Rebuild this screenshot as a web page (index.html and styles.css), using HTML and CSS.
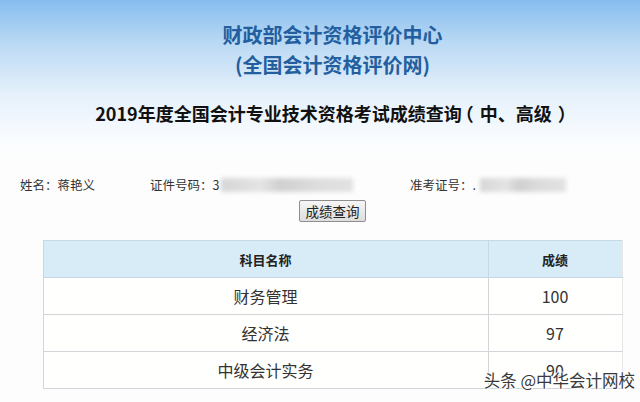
FILE: index.html
```html
<!DOCTYPE html>
<html lang="zh-CN">
<head>
    <meta charset="UTF-8">
    <title>成绩查询</title>
    <link rel="stylesheet" href="styles.css">
</head>
<body>
    <div class="page">
        <!-- 顶部标题 -->
        <div class="banner">
            <h1 class="org">财政部会计资格评价中心</h1>
            <h1 class="org">(全国会计资格评价网)</h1>
            <h2 class="exam-title">2019年度全国会计专业技术资格考试成绩查询<span class="paren-open">（</span>中、高级<span class="paren-close">）</span></h2>
        </div>

        <!-- 考生信息 -->
        <div class="info">
            <div class="info-item name">姓名：蒋艳义</div>
            <div class="info-item idcard">证件号码：3<span class="masked masked-id"></span></div>
            <div class="info-item ticket">准考证号：.<span class="masked masked-ticket"></span></div>
        </div>
        <div class="actions">
            <button type="button" class="query-btn">成绩查询</button>
        </div>

        <!-- 成绩表 -->
        <div class="result">
            <table class="score-table">
                <thead>
                    <tr>
                        <th class="col-subject">科目名称</th>
                        <th class="col-score">成绩</th>
                    </tr>
                </thead>
                <tbody>
                    <tr><td>财务管理</td><td>100</td></tr>
                    <tr><td>经济法</td><td>97</td></tr>
                    <tr><td>中级会计实务</td><td>90</td></tr>
                </tbody>
            </table>
            <div class="watermark">头条 @中华会计网校</div>
        </div>
    </div>
</body>
</html>
```

FILE: styles.css
```css
/* page base */
body {
    margin: 0;
    overflow: hidden;
    font-family: "Noto Sans CJK SC", "Microsoft YaHei", sans-serif;
    color: #333;
    background: linear-gradient(to bottom, #86bdef 0%, #bcdaf4 45px, #e6f1fb 95px, #fbfdff 145px, #fdfdfd 160px);
    background-repeat: no-repeat;
    background-color: #fdfdfd;
    height: 402px;
}

.page {
    width: 625px;
    margin-left: 20px;
}

/* title block */
.banner {
    text-align: center;
    padding-top: 20px;
}

.org {
    margin: 0;
    font-size: 20px;
    line-height: 30px;
    font-weight: bold;
    color: #235f9f;
}

.exam-title {
    margin: 20px 0 0 0;
    font-size: 18px;
    line-height: 26px;
    font-weight: bold;
    color: #111;
}

/* center the full-width brackets like the original font does */
.paren-open {
    margin-left: -6px;
    margin-right: 6px;
}

.paren-close {
    margin-left: 6px;
    margin-right: -6px;
}

/* candidate info */
.info {
    display: flex;
    margin-top: 51px;
    font-size: 12.5px;
    line-height: 16px;
    color: #333;
}

.info-item {
    display: flex;
    align-items: center;
}

.name {
    width: 130px;
}

.idcard {
    width: 260px;
}

.masked {
    display: inline-block;
    height: 14px;
    background: linear-gradient(to right, #d6d6d6 0%, #e4e4e4 30%, #d0d0d0 45%, #dcdcdc 70%, #e2e2e2 100%);
    filter: blur(2px);
}

.masked-id {
    width: 132px;
    margin-left: 2px;
}

.masked-ticket {
    width: 86px;
    margin-left: 4px;
}

.actions {
    text-align: center;
    margin-top: 5px;
}

.query-btn {
    font-family: "Noto Sans CJK SC", sans-serif;
    font-size: 13.5px;
    line-height: 18px;
    height: 22px;
    width: 67px;
    padding: 0;
    color: #222;
    border: 1px solid #8e8e8e;
    border-radius: 2px;
    background: linear-gradient(to bottom, #f6f6f6, #dddddd);
}

/* result table */
.result {
    position: relative;
    margin-top: 18px;
}

.score-table {
    width: 580px;
    margin: 0 auto;
    border-collapse: collapse;
    background: #fffffd;
}

.score-table th,
.score-table td {
    border: 1px solid #d2d6da;
    text-align: center;
    height: 36px;
    padding: 0;
}

.score-table th {
    background: #d8ecf8;
    font-size: 13px;
    font-weight: bold;
    color: #222;
    border-color: #c4d8e6;
}

.score-table td {
    font-size: 16px;
    color: #333;
}

.col-subject {
    width: 444px;
}

.score-table tr > :last-child {
    border-right-color: #e6e6e6;
}

.watermark {
    position: absolute;
    right: 10px;
    top: 128px;
    font-size: 16.5px;
    color: #3a3a3a;
    text-shadow: 1px 0 0 #fff, -1px 0 0 #fff, 0 1px 0 #fff, 0 -1px 0 #fff, 1px 1px 1px #fff;
}
```
